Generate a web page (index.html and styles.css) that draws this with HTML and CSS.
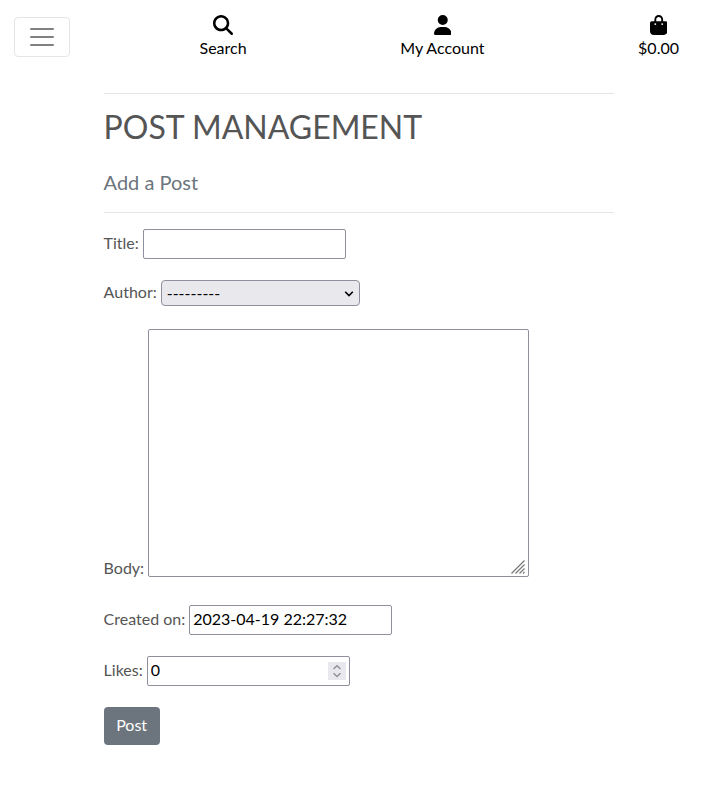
FILE: index.html
```html
<!DOCTYPE html>
<html lang="en">
<head>
<meta charset="utf-8">
<title>Post Management</title>
<link rel="stylesheet" href="styles.css">
</head>
<body>
<header class="navbar">
  <button class="toggler" type="button" aria-label="Toggle navigation">
    <svg width="30" height="30" viewBox="0 0 30 30"><path stroke="#808080" stroke-width="2" stroke-linecap="round" d="M4 7h22M4 15h22M4 23h22"/></svg>
  </button>
  <nav class="links">
    <a class="link">
      <svg width="20" height="20" viewBox="0 0 512 512"><path d="M416 208c0 45.900-14.900 88.300-40 122.700L502.600 457.400c12.500 12.500 12.500 32.800 0 45.300s-32.800 12.500-45.300 0L330.700 376c-34.400 25.200-76.800 40-122.700 40C93.100 416 0 322.900 0 208S93.100 0 208 0S416 93.100 416 208zM208 352a144 144 0 1 0 0-288 144 144 0 1 0 0 288z"/></svg>
      <span>Search</span>
    </a>
    <a class="link">
      <svg width="17.500" height="20" viewBox="0 0 448 512"><path d="M224 256A128 128 0 1 0 224 0a128 128 0 1 0 0 256zm-45.700 48C79.800 304 0 383.800 0 482.300C0 498.700 13.300 512 29.700 512H418.300c16.400 0 29.700-13.300 29.700-29.700C448 383.800 368.200 304 269.700 304H178.300z"/></svg>
      <span>My Account</span>
    </a>
    <a class="link">
      <svg width="17.500" height="20" viewBox="0 0 448 512"><path d="M160 112c0-35.300 28.700-64 64-64s64 28.700 64 64v48H160V112zm-48 48H48c-26.500 0-48 21.500-48 48V416c0 53 43 96 96 96H352c53 0 96-43 96-96V208c0-26.500-21.500-48-48-48H336V112C336 50.100 285.900 0 224 0S112 50.100 112 112v48zm24 48a24 24 0 1 1 0 48 24 24 0 1 1 0-48zm152 24a24 24 0 1 1 48 0 24 24 0 1 1-48 0z"/></svg>
      <span>$0.00</span>
    </a>
  </nav>
</header>
<main class="content">
  <div class="heading">
    <h2>POST MANAGEMENT</h2>
    <h5>Add a Post</h5>
  </div>
  <form class="form">
    <div class="row"><label for="title">Title:</label><input class="field" id="title" type="text"></div>
    <div class="row row-author"><label for="author">Author:</label>
      <div class="select-wrap">
        <select class="select" id="author"><option>---------</option></select>
        <svg class="chevron" width="10" height="6" viewBox="0 0 10 6"><path d="M1.200.8 5 4.600 8.800.8" fill="none" stroke="#000" stroke-width="1.600"/></svg>
      </div>
    </div>
    <div class="row row-body"><label for="body">Body:</label>
      <div class="area-wrap">
        <textarea class="area" id="body"></textarea>
        <svg class="grip" width="15" height="14" viewBox="0 0 15 14"><path d="M.5 13.500 13.500.5M4.500 13.500l9-9M8.500 13.500l5-5M12 13.500l1.500-1.500" fill="none" stroke="#777" stroke-width="1.200"/></svg>
      </div>
    </div>
    <div class="row row-created"><label for="created">Created on:</label><input class="field" id="created" type="text" value="2023-04-19 22:27:32"></div>
    <div class="row row-likes"><label for="likes">Likes:</label>
      <div class="number-wrap">
        <input class="field" id="likes" type="text" value="0">
        <span class="spinner"><svg width="18" height="18" viewBox="0 0 18 18"><path d="m5.500 7 3.500-3.300L12.500 7M5.500 11.200 9 14.500l3.500-3.300" fill="none" stroke="#8f8f9d" stroke-width="1.400"/></svg></span>
      </div>
    </div>
    <button class="submit" type="button">Post</button>
  </form>
</main>
</body>
</html>
```
FILE: styles.css
```css
* {
  box-sizing: border-box;
}

body {
  margin: 0;
  background: #fff;
  color: #555;
  font: 16px/24px Lato, sans-serif;
}

svg {
  display: block;
}

.navbar {
  display: flex;
  align-items: flex-start;
  height: 93px;
  padding: 14px 39px 0 14px;
}

.toggler {
  display: flex;
  align-items: center;
  justify-content: center;
  width: 56px;
  height: 40px;
  margin-top: 3px;
  padding: 0;
  border: 1px solid #e5e5e5;
  border-radius: 4px;
  background: #fff;
}

.links {
  display: flex;
  flex: 1;
  justify-content: space-between;
  margin-left: 129.5px;
}

.link {
  display: flex;
  flex-direction: column;
  align-items: center;
  gap: 1.5px;
  padding-top: 0.5px;
  color: #000;
}

.content {
  width: 510.7px;
  margin-left: 103.6px;
}

.heading {
  height: 120px;
  border-top: 1px solid #e5e5e5;
  border-bottom: 1px solid #e5e5e5;
}

h2,
h5 {
  margin: 0;
  font-weight: 400;
}

h2 {
  padding-top: 14px;
  font-size: 32px;
  line-height: 38px;
}

h5 {
  margin-top: 24px;
  color: #6c757d;
  font-size: 20px;
  line-height: 24px;
}

.form {
  padding-top: 16px;
}

.row {
  display: flex;
  align-items: center;
  gap: 4px;
}

label {
  padding-bottom: 2px;
}

input,
select,
textarea,
button {
  margin: 0;
  font: inherit;
}

.field {
  display: block;
  width: 203px;
  height: 30px;
  padding: 0 3px 3px;
  border: 1px solid #8f8f9d;
  border-radius: 2px;
  background: #fff;
  color: #000;
}

.row-author {
  margin-top: 21px;
}

.select-wrap,
.area-wrap,
.number-wrap {
  position: relative;
}

.select {
  display: block;
  width: 199px;
  height: 26px;
  padding: 0 5px 2px;
  border: 1px solid #8f8f9d;
  border-radius: 4px;
  background: #e9e9ed;
  color: #000;
  appearance: none;
}

.chevron {
  position: absolute;
  top: 11px;
  right: 6px;
}

.row-body {
  align-items: flex-end;
  margin-top: 23px;
}

.row-body label {
  margin-bottom: -3px;
  padding-bottom: 0;
}

.area {
  display: block;
  width: 381px;
  height: 248px;
  border: 1px solid #8f8f9d;
  border-radius: 2px;
  background: #fff;
  resize: none;
}

.grip {
  position: absolute;
  right: 3px;
  bottom: 3px;
}

.row-created {
  margin-top: 28px;
}

.row-likes {
  margin-top: 21px;
}

.spinner {
  position: absolute;
  top: 6px;
  right: 4px;
  background: #e9e9ed;
}

.submit {
  display: block;
  width: 56px;
  height: 38px;
  margin-top: 21px;
  padding: 0 0 2px;
  border: 0;
  border-radius: 4px;
  background: #6c757d;
  color: #fff;
}
```
